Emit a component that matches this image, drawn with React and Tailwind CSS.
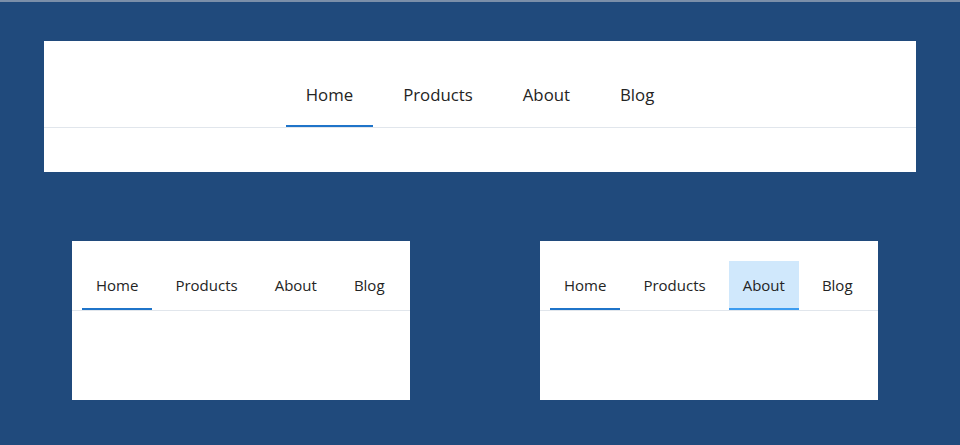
import React, { useState } from 'react';

const tabs = ['Home', 'Products', 'About', 'Blog'];

const TabBar = ({ size = 'md', hovered, centered }) => {
  const [active, setActive] = useState('Home');
  const big = size === 'lg';

  return (
    <div className={`flex border-b border-[#e1e6ec] ${centered ? 'justify-center' : 'px-[10px]'}`}>
      <div className={`flex ${big ? 'gap-[10px]' : 'gap-[9px]'}`}>
        {tabs.map((tab) => {
          const isActive = tab === active;
          const isHover = tab === hovered;
          return (
            <button
              key={tab}
              onClick={() => setActive(tab)}
              className={`relative flex items-center text-[#242424] ${
                big ? 'h-[65px] px-[20px] text-[16.8px]' : 'h-[49px] px-[14px] text-[15px]'
              } ${isHover ? 'bg-[#d0e8fc]' : ''}`}
            >
              <span>{tab}</span>
              {(isActive || isHover) && (
                <span
                  className={`absolute left-0 right-0 bottom-0 h-[2px] ${
                    isActive ? 'bg-[#1f74c9]' : 'bg-[#3c9cf0]'
                  }`}
                />
              )}
            </button>
          );
        })}
      </div>
    </div>
  );
}

export default function App() {
  return (
    <div
      className="h-[445px] w-[960px] bg-[#204a7c] border-t-2 border-[#7b8fa9] pt-[39px]"
      style={{ fontFamily: '"Segoe UI", "Open Sans", "Noto Sans", sans-serif' }}
    >
      {/* Wide tabs */}
      <div className="mx-[44px] h-[131px] bg-white pt-[21px]">
        <TabBar size="lg" centered />
      </div>

      {/* Small tabs */}
      <div className="mt-[69px] flex justify-between px-[72px] pr-[82px]">
        <div className="h-[159px] w-[338px] bg-white pt-[20px]">
          <TabBar />
        </div>
        <div className="h-[159px] w-[338px] bg-white pt-[20px]">
          <TabBar hovered="About" />
        </div>
      </div>
    </div>
  );
}
